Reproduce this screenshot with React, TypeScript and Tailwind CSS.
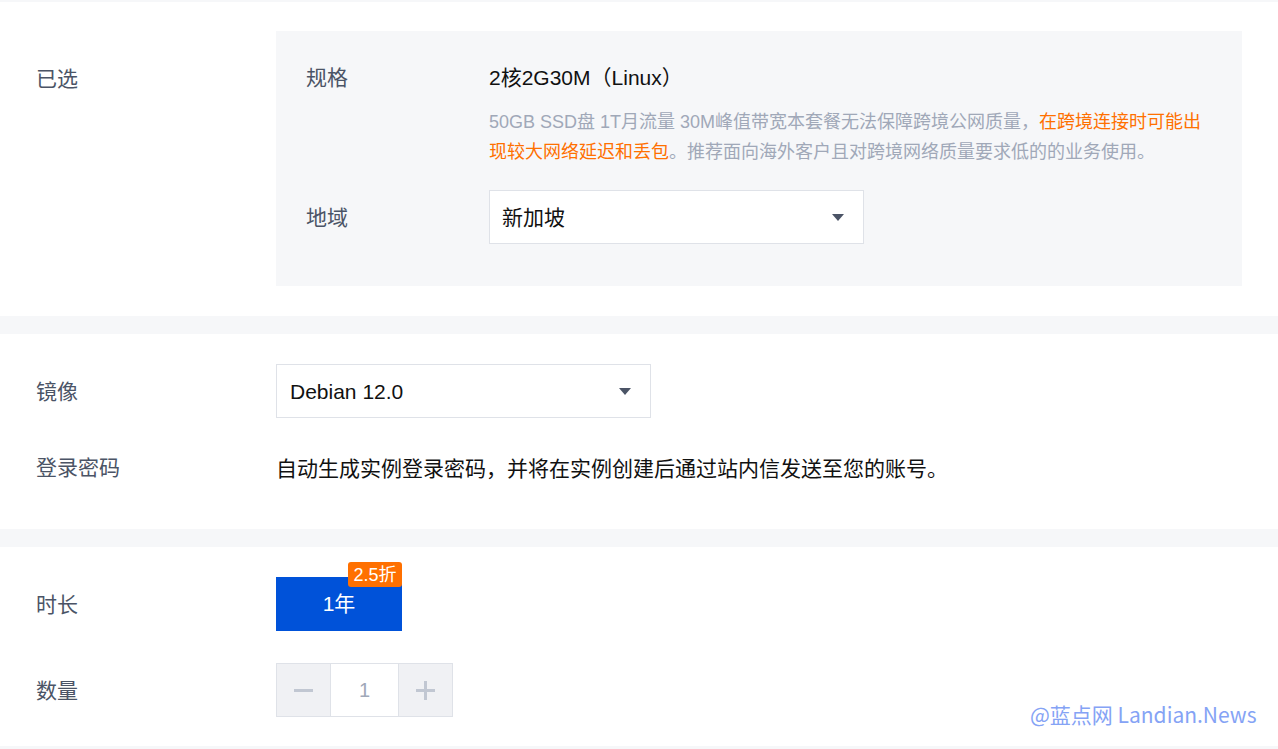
import React from "react";

function Caret() {
  return (
    <svg width="12" height="7" viewBox="0 0 12 7" className="shrink-0">
      <path d="M0 0 H12 L6 7 Z" fill="#4b5466" />
    </svg>
  );
}

function Select({ value, width, padLeft }: { value: string; width: string; padLeft: string }) {
  return (
    <div className={`${width} ${padLeft} h-[54px] bg-white border border-[#dfe2e8] flex items-center justify-between pr-[19px]`}>
      <span className="text-[21px] text-[#111] leading-[30px] mt-[2px]">{value}</span>
      <Caret />
    </div>
  );
}

export default function App() {
  return (
    <div className="font-['Liberation_Sans','Noto_Sans_CJK_SC',sans-serif] bg-[#f6f7f9] min-h-[749px] w-[1278px] pt-[2px] relative">
      {/* Section 1 */}
      <div className="bg-white h-[314px] flex">
        <div className="w-[276px] pl-[36px] pt-[62px] text-[21px] leading-[30px] text-[#4b5466]">已选</div>
        <div className="mt-[29px] w-[966px] h-[255px] bg-[#f6f7f9] pl-[30px] pt-[32px]">
          <div className="flex">
            <div className="w-[183px] text-[21px] leading-[30px] text-[#4b5466]">规格</div>
            <div className="flex-1 pr-[30px]">
              <div className="text-[21px] leading-[30px] text-[#111]">2核2G30M（Linux）</div>
              <div className="mt-[14px] text-[18px] leading-[30px] text-[#a0a8b8]">
                50GB SSD盘 1T月流量 30M峰值带宽本套餐无法保障跨境公网质量，<span className="text-[#ff7000]">在跨境连接时可能出现较大网络延迟和丢包</span>。推荐面向海外客户且对跨境网络质量要求低的的业务使用。
              </div>
            </div>
          </div>
          <div className="flex items-center mt-[23px]">
            <div className="w-[183px] text-[21px] leading-[30px] text-[#4b5466] mt-[2px]">地域</div>
            <Select value="新加坡" width="w-[375px]" padLeft="pl-[12px]" />
          </div>
        </div>
      </div>

      {/* Section 2 */}
      <div className="mt-[18px] bg-white h-[195px] pt-[30px] pl-[36px]">
        <div className="flex items-center">
          <div className="w-[240px] text-[21px] leading-[30px] text-[#4b5466] mt-[2px]">镜像</div>
          <Select value="Debian 12.0" width="w-[375px]" padLeft="pl-[13px]" />
        </div>
        <div className="flex items-center mt-[36px]">
          <div className="w-[240px] text-[21px] leading-[30px] text-[#4b5466] -mt-[2px]">登录密码</div>
          <div className="text-[21px] leading-[30px] text-[#111]">自动生成实例登录密码，并将在实例创建后通过站内信发送至您的账号。</div>
        </div>
      </div>

      {/* Section 3 */}
      <div className="mt-[18px] bg-white h-[199px] pt-[30px] pl-[36px]">
        <div className="flex items-center">
          <div className="w-[240px] text-[21px] leading-[30px] text-[#4b5466] mt-[2px]">时长</div>
          <div className="relative w-[126px] h-[54px] bg-[#0052d9] flex items-center justify-center text-white text-[21px]">
            1年
            <div className="absolute right-0 top-[-15px] w-[54px] h-[25px] bg-[#ff7000] rounded-[3px] flex items-center justify-center text-white text-[18px] leading-none">
              2.5折
            </div>
          </div>
        </div>
        <div className="flex items-center mt-[32px]">
          <div className="w-[240px] text-[21px] leading-[30px] text-[#4b5466] mt-[2px]">数量</div>
          <div className="flex h-[54px] border border-[#dfe2e8]">
            <div className="w-[53px] bg-[#f0f1f4] flex items-center justify-center">
              <div className="w-[19px] h-[3px] bg-[#c1c7d2]" />
            </div>
            <div className="w-[69px] bg-white border-x border-[#dfe2e8] flex items-center justify-center text-[20px] text-[#a0a8b8]">1</div>
            <div className="w-[53px] bg-[#f0f1f4] flex items-center justify-center relative">
              <div className="w-[19px] h-[3px] bg-[#c1c7d2]" />
              <div className="absolute w-[3px] h-[19px] bg-[#c1c7d2]" />
            </div>
          </div>
        </div>
      </div>

      <div className="absolute left-[1030px] top-[700px] text-[21px] leading-[28px] text-[#85a3f5] font-['Noto_Sans_CJK_SC',sans-serif]">
        @蓝点网 Landian.News
      </div>
    </div>
  );
}
